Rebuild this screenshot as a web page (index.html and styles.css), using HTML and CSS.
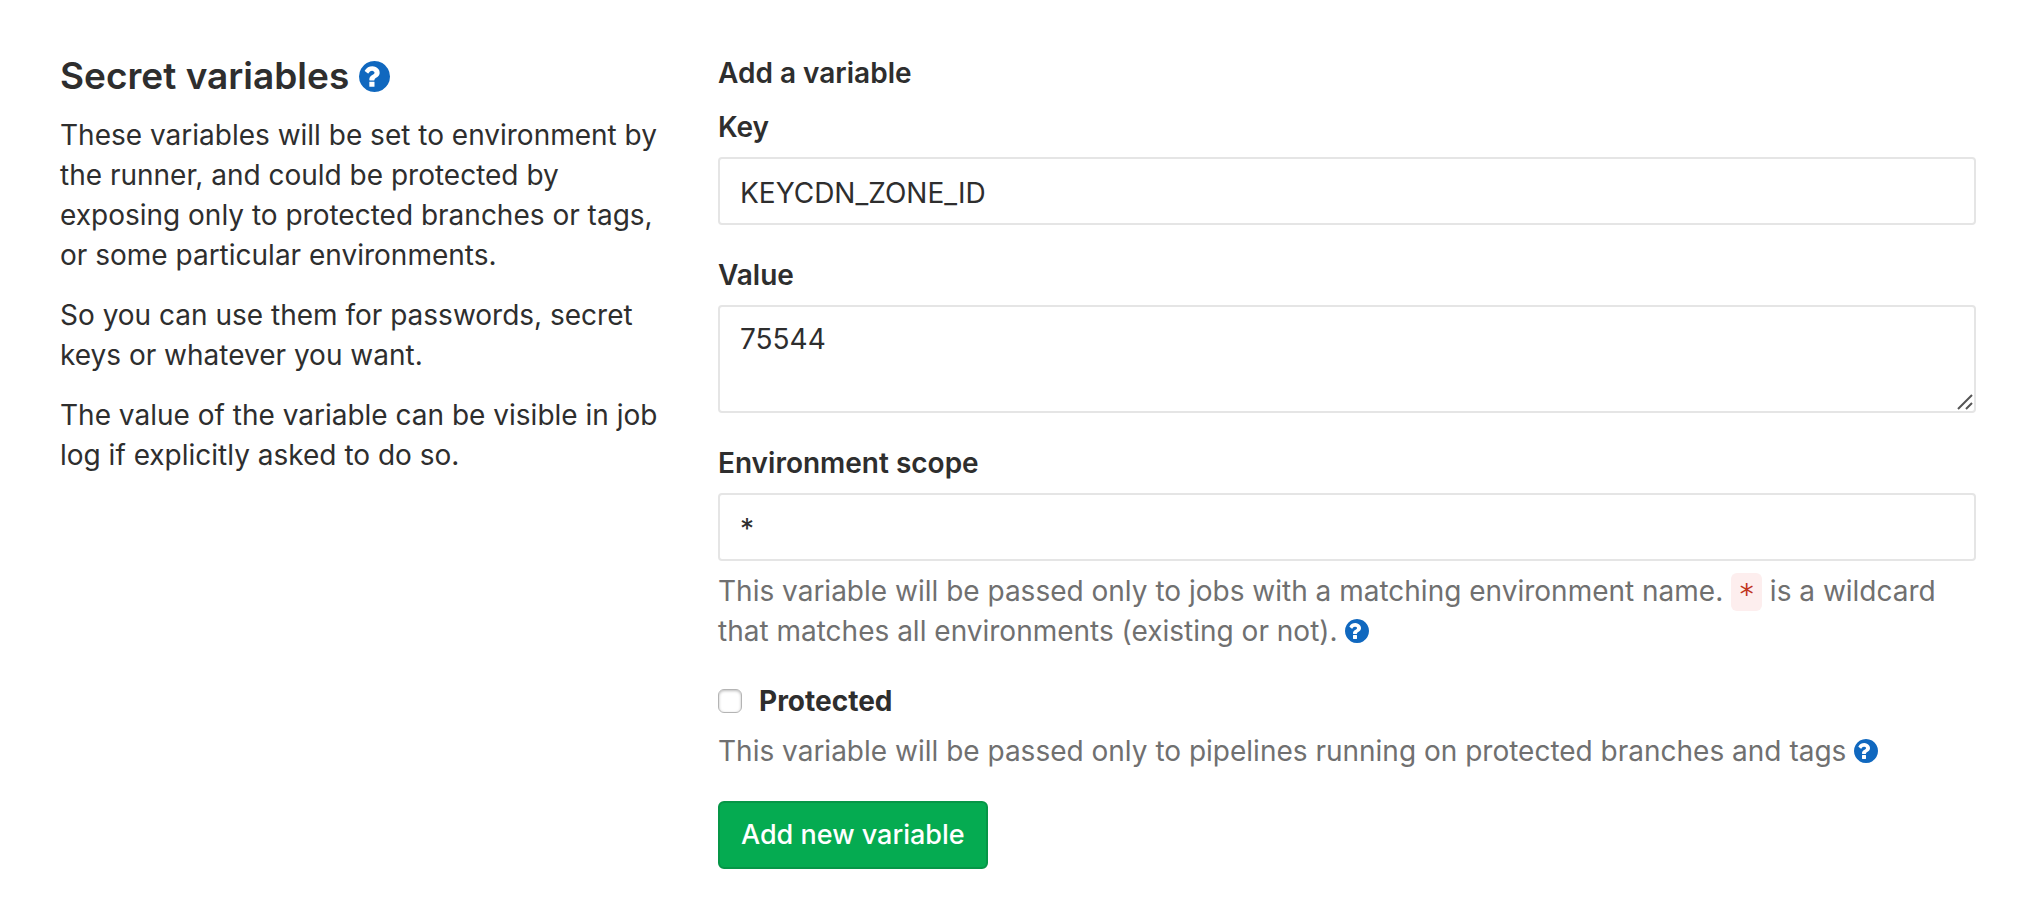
FILE: index.html
```html
<!DOCTYPE html>
<html lang="en">
<head>
<meta charset="utf-8">
<meta name="viewport" content="width=device-width, initial-scale=1">
<title>Secret variables</title>
<link rel="stylesheet" href="styles.css">
</head>
<body>
<svg class="sprite" aria-hidden="true">
  <symbol id="question-circle" viewBox="128 128 1536 1536">
    <path d="M896 1376v-192q0-14-9-23t-23-9H672q-14 0-23 9t-9 23v192q0 14 9 23t23 9h192q14 0 23-9t9-23zm256-672q0-88-55.500-163T958 425t-170-41q-243 0-371 213-15 24 8 42l132 100q7 6 19 6 16 0 25-12 53-68 86-92 34-24 86-24 48 0 85.500 26t37.500 59q0 38-20 61t-68 45q-63 28-115.500 86.500T640 1020v36q0 14 9 23t23 9h192q14 0 23-9t9-23q0-19 21.500-49.500T972 957q32-18 49-28.500t46-35 44.500-48 28-60.500 12.500-81zm512 192q0 209-103 385.500T1281.500 1561 896 1664t-385.500-103T231 1281.500 128 896t103-385.500T510.500 231 896 128t385.500 103T1561 510.500 1664 896z"/>
  </symbol>
</svg>
<main class="settings">
  <section class="intro">
    <h1 class="intro-title">Secret variables <a class="help-link" href="#" aria-label="About secret variables"><svg class="help-icon help-icon-large"><use href="#question-circle"/></svg></a></h1>
    <p class="intro-text">These variables will be set to environment by the runner, and could be protected by exposing only to protected branches or tags, or some particular environments.</p>
    <p class="intro-text">So you can use them for passwords, secret keys or whatever you want.</p>
    <p class="intro-text">The value of the variable can be visible in job log if explicitly asked to do so.</p>
  </section>
  <form class="variable-form">
    <h2 class="form-title">Add a variable</h2>
    <div class="field">
      <label class="label" for="key">Key</label>
      <input class="control" id="key" type="text" value="KEYCDN_ZONE_ID">
    </div>
    <div class="field">
      <label class="label" for="value">Value</label>
      <div class="area-wrap">
        <textarea class="control area" id="value">75544</textarea>
        <svg class="grip" viewBox="0 0 16 16" aria-hidden="true"><path d="M1 15L15 1M9 15l6-6"/></svg>
      </div>
    </div>
    <div class="field">
      <label class="label" for="scope">Environment scope</label>
      <input class="control" id="scope" type="text" value="*">
      <p class="help">This variable will be passed only to jobs with a matching environment name. <code class="code">*</code> is a wildcard that matches all environments (existing or not). <a class="help-link" href="#" aria-label="About environment scope"><svg class="help-icon"><use href="#question-circle"/></svg></a></p>
    </div>
    <div class="field">
      <div class="check-row">
        <input class="check" id="protected" type="checkbox">
        <label class="check-label" for="protected">Protected</label>
      </div>
      <p class="help">This variable will be passed only to pipelines running on protected branches and tags <a class="help-link" href="#" aria-label="About protected variables"><svg class="help-icon"><use href="#question-circle"/></svg></a></p>
    </div>
    <button class="submit" type="button">Add new variable</button>
  </form>
</main>
</body>
</html>
```
FILE: styles.css
```css
* { box-sizing: border-box; }
body {
  margin: 0;
  background: #fff;
  color: #2e2e2e;
  font: 28px/40px Inter, "Liberation Sans", sans-serif;
}
.sprite { display: none; }
.settings {
  display: grid;
  grid-template-columns: 628fr 1258fr;
  gap: 30px;
  padding: 53px 56px 40px 60px;
}
.intro { padding-right: 20px; }
.intro-title { margin: 0 0 16px; font-size: 37px; line-height: 46px; font-weight: 600; }
.intro-text { margin: 0 0 20px; }
.help-link { color: #1068bf; text-decoration: none; }
.help-icon { width: 24px; height: 24px; fill: currentColor; vertical-align: -2px; }
.help-icon-large { width: 31px; height: 31px; vertical-align: -3px; }
.form-title { margin: 0 0 14px; font-size: 28px; line-height: 40px; font-weight: 600; }
.field { margin-bottom: 30px; }
.label { display: block; margin-bottom: 10px; font-weight: 600; }
.control {
  display: block;
  width: 100%;
  height: 68px;
  padding: 14px 20px 10px;
  border: 2px solid #e5e5e5;
  border-radius: 4px;
  background: #fff;
  color: #2e2e2e;
  font: inherit;
}
.area-wrap { position: relative; }
.area { height: 108px; padding-top: 12px; resize: none; }
.grip {
  position: absolute;
  right: 3px;
  bottom: 3px;
  width: 16px;
  height: 16px;
  fill: none;
  stroke: #555;
  stroke-width: 2;
}
.help { margin: 10px 0 0; color: #707070; }
.code {
  display: inline-block;
  padding: 7px 7px 1px;
  border-radius: 6px;
  background: #fdeeee;
  color: #c0341d;
  font: 28px/30px "DejaVu Sans Mono", monospace;
  vertical-align: -3px;
}
.check-row { display: flex; align-items: center; gap: 17px; }
.check {
  appearance: none;
  width: 24px;
  height: 24px;
  margin: 0;
  border: 1px solid #b4b4b4;
  border-radius: 6px;
  background: #fff;
  box-shadow: inset 0 1px 3px #bbb;
}
.check-label { font-weight: 700; }
.submit {
  height: 68px;
  padding: 0 21px;
  border: 2px solid #069647;
  border-radius: 6px;
  background: #05ab51;
  color: #fff;
  font: inherit;
  font-size: 27px;
  font-weight: 500;
}
```
